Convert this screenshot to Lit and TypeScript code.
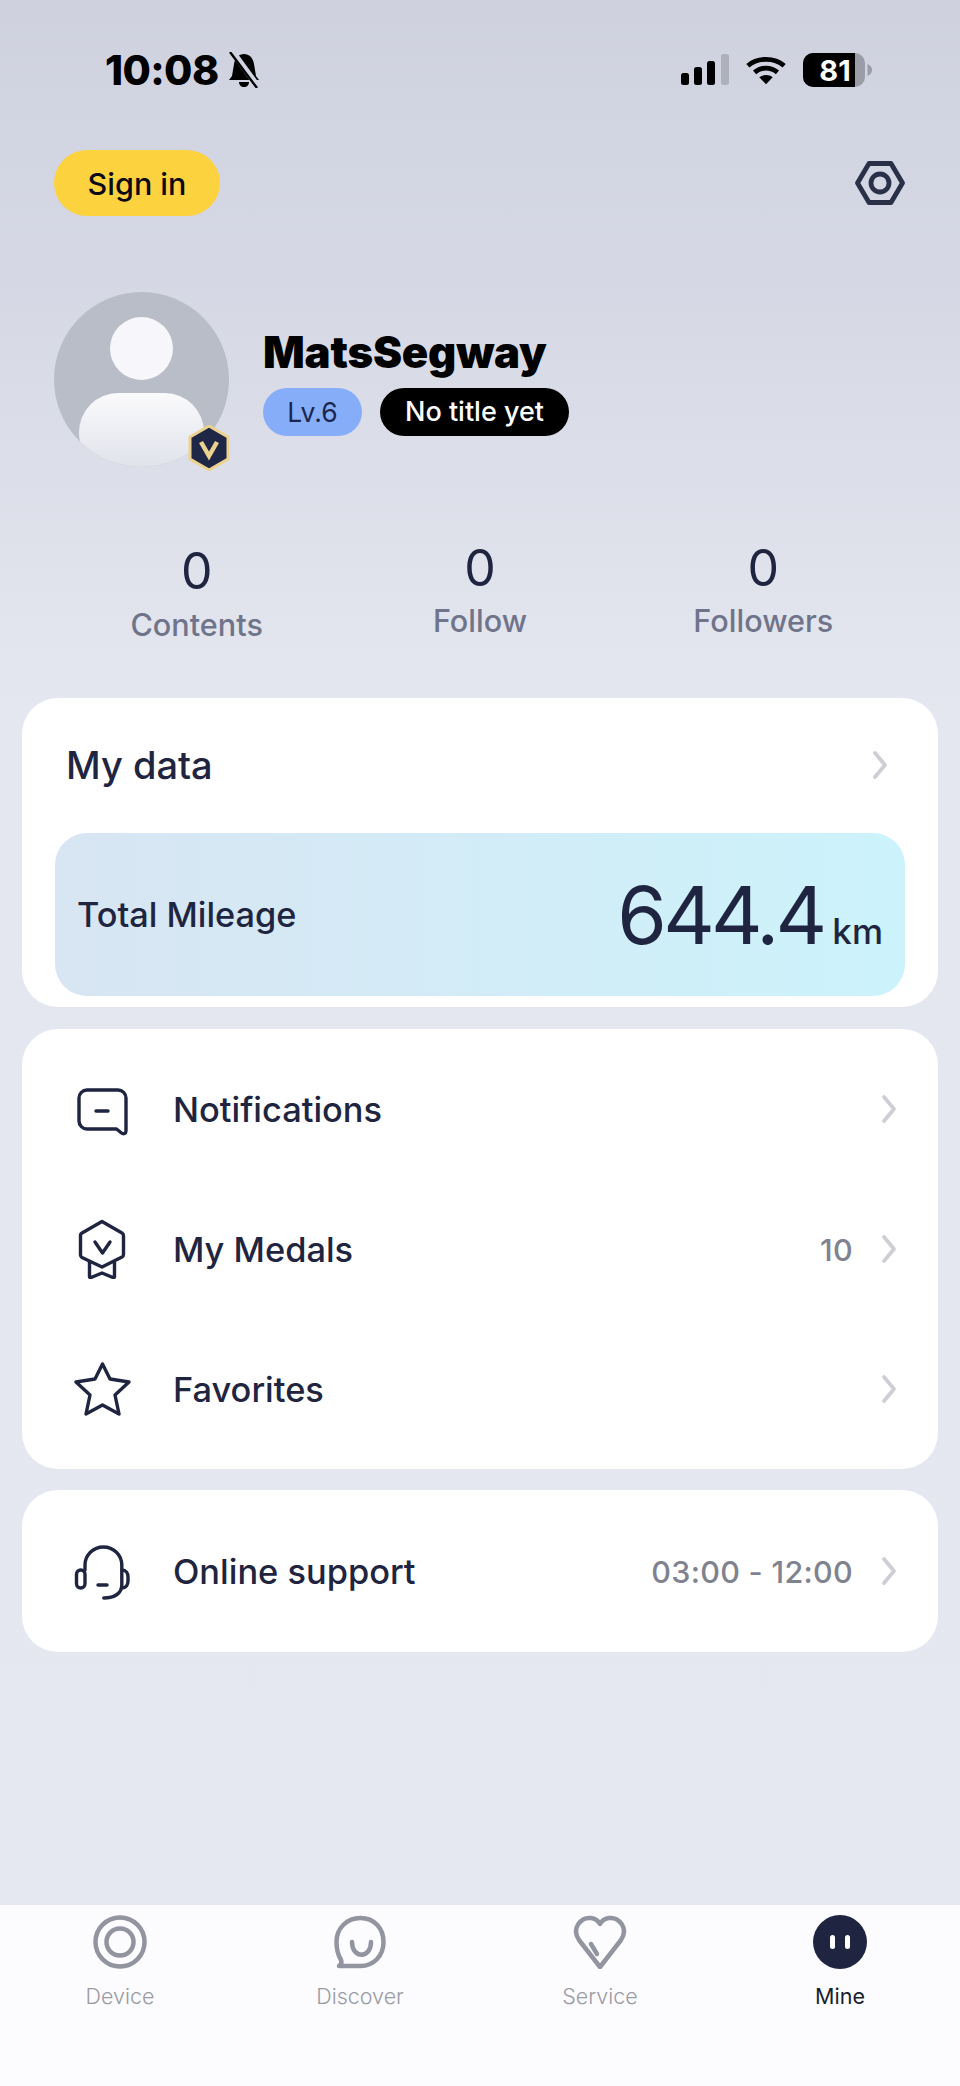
import { LitElement, html, css, svg } from "lit";
import { customElement } from "lit/decorators.js";

const chevron = html`<svg class="chev" viewBox="0 0 18 32" fill="none" stroke="#cdcfd4" stroke-width="3.800" stroke-linecap="round" stroke-linejoin="round"><path d="M4 4l10 12L4 28"/></svg>`;

const INK = "#1f2540";
const notif = svg`<path d="M13 11h31a8 8 0 0 1 8 8v33c0 2.500-2.500 3.500-4.500 2l-5-4H13a8 8 0 0 1-8-8V19a8 8 0 0 1 8-8z"/><path d="M22 32h12"/>`;
const medal = svg`<path d="M28 2.500l20 11.500a3 3 0 0 1 1.500 2.500v19a3 3 0 0 1-1.500 2.500L28 48 8 38.500A3 3 0 0 1 6.500 36V17a3 3 0 0 1 1.500-3z"/><path d="M21 23l7.500 11 7.500-11"/><path d="M15.500 43v14.500a1 1 0 0 0 1.500 1L28 54l11 4.500a1 1 0 0 0 1.500-1V43"/>`;
const star = svg`<path d="M28.500 5L36 20l19 3-14 13 4 19-16.500-9L12 55l4-19L2 23l19-3z"/>`;
const head = svg`<path d="M11 29V24a18.400 18 0 0 1 36.800 0v20c0 8-7 13-18 13"/><rect x="2.500" y="29" width="8.500" height="18" rx="4.200"/><path d="M48 29c4 0 6 3 6 7v4c0 4-2 7-6 7"/><path d="M24 44h9"/>`;

@customElement("app-root")
export class AppRoot extends LitElement {
  static styles = css`
    :host {
      display: flex;
      flex-direction: column;
      height: 2086px;
      width: 960px;
      overflow: hidden;
      font-family: Inter, "Noto Sans", sans-serif;
      color: #1f2540;
      background: linear-gradient(180deg, #cfd1df 0, #d5d8e4 260px, #e4e7ef 700px, #e5e8f0 100%);
    }
    .status {
      height: 140px;
      flex: none;
      display: flex;
      align-items: center;
      justify-content: space-between;
      padding: 0 88px 0 105px;
      box-sizing: border-box;
      color: #000;
    }
    .status-left, .status-right { display: flex; align-items: center; }
    .time { font-size: 41px; font-weight: 800; letter-spacing: -0.600px; line-height: 1; }
    .bell { width: 34px; height: 36px; margin-left: 8px; }
    .signal { width: 48px; height: 32px; }
    .wifi { width: 42px; height: 32px; margin-left: 16px; }
    .battery { width: 69px; height: 34px; margin-left: 16px; position: relative; }
    .battery svg { width: 69px; height: 34px; display: block; }
    .battery span {
      position: absolute; left: 12px; top: 0; width: 40px; height: 34px;
      display: flex; align-items: center; justify-content: center;
      color: #fff; font-size: 29px; font-weight: 700; line-height: 1;
    }
    .top {
      display: flex; justify-content: space-between; align-items: center;
      padding: 10px 55px 0 54px; flex: none;
    }
    .signin {
      width: 166px; height: 66px; border-radius: 33px; background: #fdd23f; color: #0a0a14;
      display: flex; align-items: center; justify-content: center;
      font-size: 30.500px; font-weight: 500;
    }
    .gear { width: 50px; height: 46px; }
    .profile { display: flex; align-items: center; padding: 76px 0 0 54px; flex: none; }
    .avatar {
      width: 175px; height: 175px; border-radius: 50%; background: #b9bdc7; position: relative; flex: none;
    }
    .avatar-clip {
      width: 175px; height: 175px; border-radius: 50%; overflow: hidden;
      display: flex; flex-direction: column; align-items: center;
    }
    .head { width: 63px; height: 63px; border-radius: 50%; background: #f7f7fb; margin-top: 25px; flex: none; }
    .body {
      width: 125px; height: 90px; margin-top: 13px; border-radius: 48px 48px 62px 62px; flex: none;
      background: linear-gradient(180deg, #fafafc 0, #dfe2ea 85%);
    }
    .badge { position: absolute; width: 42px; height: 46px; left: 134px; top: 133px; }
    .who { margin-left: 34px; display: flex; flex-direction: column; margin-top: 4px; }
    .name { font-size: 43.700px; font-weight: 900; color: #000; line-height: 52px; letter-spacing: -0.2px; }
    .tags { display: flex; gap: 18px; margin-top: 8.500px; }
    .tag {
      height: 48px; border-radius: 24px; display: flex; align-items: center; justify-content: center;
      font-size: 26.500px; font-weight: 400; box-sizing: border-box;
    }
    .lv { width: 99px; background: #86aef8; color: #1a2550; }
    .title { width: 189px; background: #000; color: #fff; font-weight: 500; font-size: 27px; }
    .stats {
      display: grid; grid-template-columns: repeat(3, 1fr); padding: 71px 55px 0; flex: none; text-align: center;
      height: 231px; box-sizing: border-box;
    }
    .stat { display: flex; flex-direction: column; align-items: center; }
    .stat.first { padding-top: 3px; }
    .num { font-size: 50px; line-height: 60px; font-weight: 400; color: #1f2540; }
    .lab { font-size: 30.600px; line-height: 40px; font-weight: 500; color: #70748a; margin-top: 3px; }
    .first .lab { margin-top: 4px; }
    .card {
      margin: 0 22px; background: #fff; border-radius: 36px; flex: none;
    }
    .list { margin-top: 22px; }
    .support { margin-top: 21px; }
    .data { height: 309px; padding: 0 33px; box-sizing: border-box; display: flex; flex-direction: column; }
    .data-head {
      height: 135px; flex: none; display: flex; align-items: center; justify-content: space-between;
      padding: 0 16px 2px 11px; box-sizing: border-box;
      font-size: 38px; font-weight: 500;
    }
    .mile {
      height: 163px; border-radius: 32px; display: flex; align-items: center; justify-content: space-between;
      padding: 0 22px; box-sizing: border-box;
      background: linear-gradient(90deg, #d8e5f2, #ccf3fb);
    }
    .mile-label { font-size: 34.300px; font-weight: 500; }
    .mile-val { display: flex; align-items: baseline; gap: 9px; font-size: 35px; font-weight: 500; }
    .mile-val b { font-size: 80px; font-weight: 400; letter-spacing: -3.800px; line-height: 1; }
    .list { padding: 10px 0; height: 440px; box-sizing: border-box; }
    .support { height: 162px; padding: 11px 0; box-sizing: border-box; }
    .row {
      height: 140px; display: flex; align-items: center; padding: 0 40px 0 52px; box-sizing: border-box;
    }
    .ico { width: 58px; height: 60px; flex: none; margin-right: 41px; }
    .row-label { font-size: 34.400px; font-weight: 500; flex: 1; }
    .row-val { font-size: 30.500px; font-weight: 500; color: #7f828f; margin-right: 27px; letter-spacing: 0.3px; }
    .chev { width: 18px; height: 32px; flex: none; }
    .spacer { flex: 1; }
    .tabs {
      height: 181px; flex: none; background: #fcfcfe; display: grid; grid-template-columns: repeat(4, 1fr);
      padding-top: 10px; box-sizing: border-box;
    }
    .tab { display: flex; flex-direction: column; align-items: center; color: #9a9ba5; font-size: 21.500px; font-weight: 300; }
    .tab svg { width: 54px; height: 54px; }
    .tab span { margin-top: 13px; line-height: 28px; }
    .tab.on { color: #1a1d2c; font-weight: 400; }
  `;

  private row(icon: unknown, label: string, val?: string) {
    return html`<div class="row">
      <svg class="ico" viewBox="0 0 58 60" fill="none" stroke=${INK} stroke-width="3.400" stroke-linecap="round" stroke-linejoin="round">${icon}</svg>
      <div class="row-label">${label}</div>
      ${val ? html`<div class="row-val">${val}</div>` : ""}
      ${chevron}
    </div>`;
  }

  render() {
    return html`
      <div class="status">
        <div class="status-left">
          <div class="time">10:08</div>
          <svg class="bell" viewBox="0 0 34 36"><path d="M17 2c5 0 9 3.500 10 10l2 12 3 4H2l3-4 2-12C8 5.500 12 2 17 2z"/><path d="M12 30h10c0 3-2 5-5 5s-5-2-5-5z"/><path d="M5 -1l27 37" stroke="#d1d3e0" stroke-width="6"/><path d="M3 0l27 36" stroke="#000" stroke-width="2.400"/></svg>
        </div>
        <div class="status-right">
          <svg class="signal" viewBox="0 0 48 32"><rect x="0" y="19" width="8" height="12" rx="2.500"/><rect x="13" y="13" width="8" height="18" rx="2.500"/><rect x="26" y="7" width="8" height="24" rx="2.500"/><rect x="40" y="0" width="8" height="31" rx="2.500" fill="#aeb0bc"/></svg>
          <svg class="wifi" viewBox="0 0 44 32" fill="none" stroke="#000" stroke-width="5"><path d="M3 11.500C13 2.500 31 2.500 41 11.500"/><path d="M10 18.500c7-6 17-6 24 0"/><path d="M22 31l-7-7.500c4-3 10-3 14 0z" fill="#000" stroke="none"/></svg>
          <div class="battery">
            <svg viewBox="0 0 69 34"><rect x="0" y="0" width="62" height="34" rx="10" fill="#9a9ca8"/><path d="M10 0h42v34H10A10 10 0 0 1 0 24V10A10 10 0 0 1 10 0z"/><path d="M64.500 11c2.500 1 4.500 3 4.500 6s-2 5-4.500 6z" fill="#9a9ca8"/></svg>
            <span>81</span>
          </div>
        </div>
      </div>

      <div class="top">
        <div class="signin">Sign in</div>
        <svg class="gear" viewBox="0 0 50 46" fill="none" stroke="#2a3048" stroke-width="4.800" stroke-linejoin="round"><path d="M14 3.500h22L47.500 23 36 42.500H14L2.500 23z"/><circle cx="25" cy="23" r="9"/></svg>
      </div>

      <div class="profile">
        <div class="avatar">
          <div class="avatar-clip"><div class="head"></div><div class="body"></div></div>
          <svg class="badge" viewBox="0 0 42 46"><path d="M21 1l19 11v22L21 45 2 34V12z" fill="#1f2746" stroke="#ecd28f" stroke-width="3" stroke-linejoin="round"/><path d="M13 17l8 14 8-14" fill="none" stroke="#ecd28f" stroke-width="4.500"/></svg>
        </div>
        <div class="who">
          <div class="name">MatsSegway</div>
          <div class="tags"><div class="tag lv">Lv.6</div><div class="tag title">No title yet</div></div>
        </div>
      </div>

      <div class="stats">
        <div class="stat first"><div class="num">0</div><div class="lab">Contents</div></div>
        <div class="stat"><div class="num">0</div><div class="lab">Follow</div></div>
        <div class="stat"><div class="num">0</div><div class="lab">Followers</div></div>
      </div>

      <div class="card data">
        <div class="data-head"><span>My data</span>${chevron}</div>
        <div class="mile">
          <div class="mile-label">Total Mileage</div>
          <div class="mile-val"><b>644.4</b>km</div>
        </div>
      </div>

      <div class="card list">
        ${this.row(notif, "Notifications")}
        ${this.row(medal, "My Medals", "10")}
        ${this.row(star, "Favorites")}
      </div>

      <div class="card support">
        ${this.row(head, "Online support", "03:00 - 12:00")}
      </div>

      <div class="spacer"></div>

      <div class="tabs">
        <div class="tab">
          <svg viewBox="0 0 54 54" fill="none" stroke="#92949f" stroke-width="4.500"><circle cx="27" cy="27" r="24.500"/><circle cx="27" cy="27" r="13.500"/></svg>
          <span>Device</span>
        </div>
        <div class="tab">
          <svg viewBox="0 0 54 54" fill="none" stroke="#92949f" stroke-width="4.500" stroke-linecap="round" stroke-linejoin="round"><path d="M6 51c2.500-2 3-4 2-6C5 40 3.500 34 3.500 27 3.500 13 14 3 27.500 3s23 10 23 24-10 24-23 24z"/><path d="M19 27c0 17 19 17 19 0"/></svg>
          <span>Discover</span>
        </div>
        <div class="tab">
          <svg viewBox="0 0 54 54" fill="none" stroke="#92949f" stroke-width="4.500" stroke-linecap="round" stroke-linejoin="round"><path d="M27 52L6 25C-2 13 8 2 18 3c4 .5 7 2.500 9 6 2-3.500 5-5.500 9-6 10-1 20 10 12 22z"/><path d="M18 29l6 10"/></svg>
          <span>Service</span>
        </div>
        <div class="tab on">
          <svg viewBox="0 0 54 54"><circle cx="27" cy="27" r="27" fill="#1f2540"/><rect x="17" y="20" width="5" height="14" rx="2.500" fill="#fff"/><rect x="32" y="20" width="5" height="14" rx="2.500" fill="#fff"/></svg>
          <span>Mine</span>
        </div>
      </div>
    `;
  }
}
